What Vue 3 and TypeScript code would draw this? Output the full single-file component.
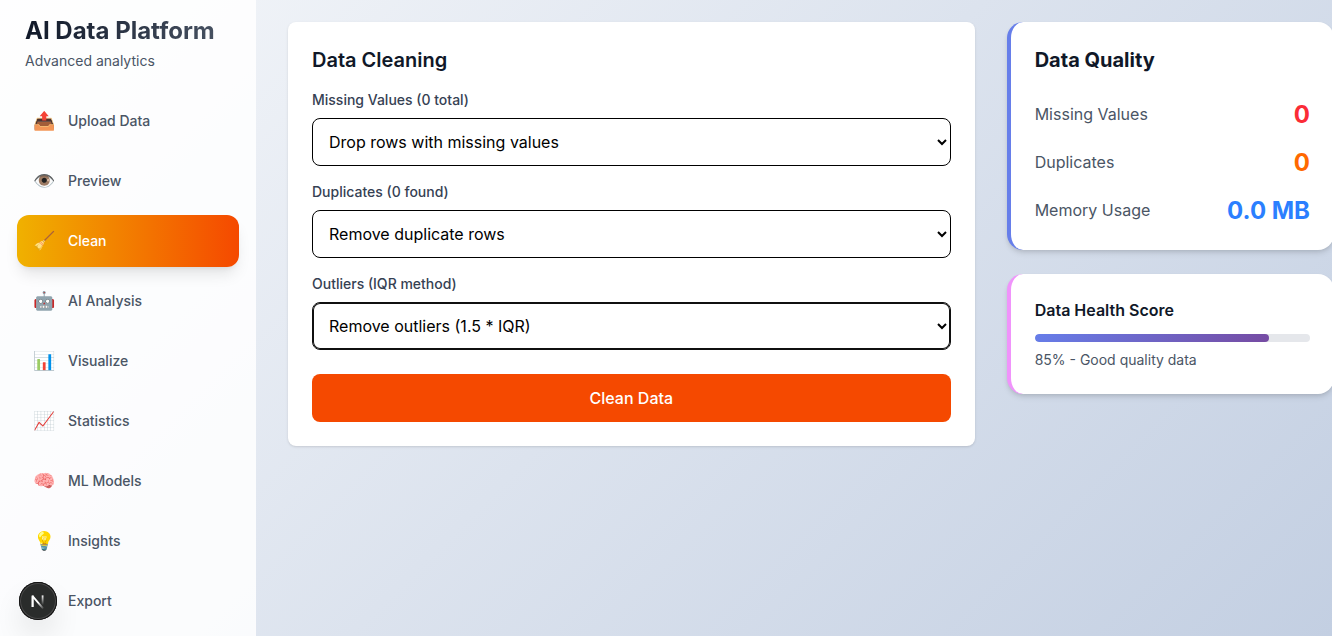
<script setup lang="ts">
import { ref } from 'vue'

interface NavItem {
  id: string
  label: string
  icon: string
}

interface Option {
  value: string
  label: string
}

interface Field {
  id: string
  label: string
  options: Option[]
}

const navItems: NavItem[] = [
  { id: 'upload', label: 'Upload Data', icon: '📤' },
  { id: 'preview', label: 'Preview', icon: '👁️' },
  { id: 'clean', label: 'Clean', icon: '🧹' },
  { id: 'analysis', label: 'AI Analysis', icon: '🤖' },
  { id: 'visualize', label: 'Visualize', icon: '📊' },
  { id: 'statistics', label: 'Statistics', icon: '📈' },
  { id: 'models', label: 'ML Models', icon: '🧠' },
  { id: 'insights', label: 'Insights', icon: '💡' },
  { id: 'export', label: 'Export', icon: '' },
]

const fields: Field[] = [
  {
    id: 'missing',
    label: 'Missing Values (0 total)',
    options: [{ value: 'drop', label: 'Drop rows with missing values' }],
  },
  {
    id: 'duplicates',
    label: 'Duplicates (0 found)',
    options: [{ value: 'remove', label: 'Remove duplicate rows' }],
  },
  {
    id: 'outliers',
    label: 'Outliers (IQR method)',
    options: [{ value: 'remove', label: 'Remove outliers (1.5 * IQR)' }],
  },
]

const metrics = [
  { label: 'Missing Values', value: '0', tone: 'red' },
  { label: 'Duplicates', value: '0', tone: 'orange' },
  { label: 'Memory Usage', value: '0.0 MB', tone: 'blue' },
]

const activeNav = ref('clean')
const activeField = ref('outliers')
const choices = ref<Record<string, string>>({
  missing: 'drop',
  duplicates: 'remove',
  outliers: 'remove',
})
const healthScore = ref(85)
</script>

<template>
  <div class="page">
    <aside class="sidebar">
      <header class="brand">
        <h1>AI Data Platform</h1>
        <p>Advanced analytics</p>
      </header>
      <nav class="nav">
        <button
          v-for="item in navItems"
          :key="item.id"
          type="button"
          class="nav-item"
          :class="{ active: item.id === activeNav }"
          @click="activeNav = item.id"
        >
          <span class="nav-icon" aria-hidden="true">{{ item.icon }}</span>
          <span>{{ item.label }}</span>
        </button>
      </nav>
    </aside>

    <main class="content">
      <section class="card cleaning">
        <h2>Data Cleaning</h2>
        <form class="form" @submit.prevent>
          <div v-for="field in fields" :key="field.id" class="field">
            <label :for="field.id">{{ field.label }}</label>
            <select
              :id="field.id"
              v-model="choices[field.id]"
              :class="{ current: field.id === activeField }"
              @focus="activeField = field.id"
            >
              <option v-for="o in field.options" :key="o.value" :value="o.value">{{ o.label }}</option>
            </select>
          </div>
          <button type="submit" class="submit">Clean Data</button>
        </form>
      </section>

      <div class="side">
        <section class="card metric-card quality">
          <h3>Data Quality</h3>
          <dl class="metrics">
            <div v-for="m in metrics" :key="m.label" class="metric">
              <dt>{{ m.label }}</dt>
              <dd :class="m.tone">{{ m.value }}</dd>
            </div>
          </dl>
        </section>
        <section class="card metric-card health">
          <h4>Data Health Score</h4>
          <div class="track">
            <div class="fill" :style="{ width: healthScore + '%' }"></div>
          </div>
          <p>{{ healthScore }}% - Good quality data</p>
        </section>
      </div>
    </main>

    <button type="button" class="dev-badge" aria-label="Open developer tools">
      <svg width="38" height="38" viewBox="0 0 38 38" fill="none">
        <defs>
          <linearGradient id="stem" x1="0" y1="13" x2="0" y2="23" gradientUnits="userSpaceOnUse">
            <stop stop-color="#fff" />
            <stop offset="1" stop-color="#fff" stop-opacity="0" />
          </linearGradient>
          <linearGradient id="diagonal" x1="20" y1="20" x2="25" y2="27" gradientUnits="userSpaceOnUse">
            <stop stop-color="#fff" />
            <stop offset="1" stop-color="#fff" stop-opacity="0" />
          </linearGradient>
        </defs>
        <path d="M13.6 25V14.2L24.2 26.6" stroke="url(#diagonal)" stroke-width="1.8" stroke-linejoin="bevel" />
        <path d="M13.6 25V13.4" stroke="#fff" stroke-width="1.8" />
        <path d="M23.6 13.4V23.5" stroke="url(#stem)" stroke-width="1.8" />
      </svg>
    </button>
  </div>
</template>

<style>
body {
  margin: 0;
}
</style>

<style scoped>
* {
  box-sizing: border-box;
  margin: 0;
}

.page {
  display: flex;
  height: 100vh;
  overflow: hidden;
  font-family: Inter, 'Liberation Sans', sans-serif;
  font-size: 16px;
  line-height: 24px;
  color: #101828;
  background: linear-gradient(135deg, #f5f7fa 0%, #c3cfe2 100%);
}

.sidebar {
  flex: 0 0 256px;
  padding: 15px 16px 0;
  border: solid rgba(255, 255, 255, 0.2);
  border-width: 0 1px;
  background: rgba(255, 255, 255, 0.85);
}

.brand {
  padding: 0 8px;
  margin-bottom: 24px;
}

.brand h1 {
  font-size: 24px;
  line-height: 32px;
  font-weight: 700;
  color: transparent;
  background: linear-gradient(to right, #101828, #4a5565);
  -webkit-background-clip: text;
  background-clip: text;
}

.brand p {
  margin-top: 4px;
  font-size: 14px;
  line-height: 20px;
  color: #4a5565;
}

.nav {
  display: flex;
  flex-direction: column;
  gap: 8px;
}

.nav-item {
  display: flex;
  align-items: center;
  gap: 12px;
  padding: 12px 16px;
  border: 0;
  border-radius: 12px;
  background: transparent;
  font: 500 14px/20px Inter, 'Liberation Sans', sans-serif;
  color: #4a5565;
  text-align: left;
  cursor: pointer;
}

.nav-item.active {
  color: #fff;
  background: linear-gradient(to right, #f0b100, #f54900);
  box-shadow: 0 10px 15px -3px rgba(0, 0, 0, 0.1), 0 4px 6px -4px rgba(0, 0, 0, 0.1);
}

.nav-icon {
  min-width: 23px;
  height: 28px;
  font-size: 18px;
  line-height: 28px;
}

.content {
  flex: 1;
  display: grid;
  grid-template-columns: repeat(3, minmax(0, 1fr));
  align-items: start;
  gap: 32px;
  padding: 22px 0 32px 32px;
  margin-right: -2px;
}

.card {
  padding: 24px;
  background: #fff;
}

.cleaning {
  grid-column: span 2;
  border-radius: 8px;
  box-shadow: 0 1px 3px rgba(0, 0, 0, 0.1), 0 1px 2px -1px rgba(0, 0, 0, 0.1);
}

h2 {
  margin-bottom: 16px;
  font-size: 20px;
  line-height: 28px;
  font-weight: 600;
}

.form {
  display: flex;
  flex-direction: column;
  gap: 16px;
}

.field {
  display: flex;
  flex-direction: column;
  gap: 8px;
}

.field label {
  font-size: 14px;
  line-height: 20px;
  font-weight: 500;
  color: #364153;
}

.field select {
  width: 100%;
  height: 48px;
  padding: 0 12px;
  border: 1px solid #000;
  border-radius: 8px;
  background-color: #fff;
  font: 400 16px/24px Inter, 'Liberation Sans', sans-serif;
  color: #000;
  outline: none;
}

.field select.current {
  border-color: #101010;
  box-shadow: inset 0 0 0 1px #101010;
}

.submit {
  height: 48px;
  margin-top: 8px;
  border: 0;
  border-radius: 8px;
  background: #f54900;
  font: 500 16px/24px Inter, 'Liberation Sans', sans-serif;
  color: #fff;
  cursor: pointer;
}

.side {
  display: flex;
  flex-direction: column;
  gap: 24px;
}

.metric-card {
  border-left: 4px solid #667eea;
  border-radius: 16px;
  box-shadow: 0 4px 6px -1px rgba(0, 0, 0, 0.1), 0 2px 4px -1px rgba(0, 0, 0, 0.1);
}

.health {
  border-left-color: #f093fb;
}

h3 {
  margin-bottom: 24px;
  font-size: 20px;
  line-height: 28px;
  font-weight: 700;
}

.metrics {
  display: flex;
  flex-direction: column;
  gap: 16px;
}

.metric {
  display: flex;
  align-items: center;
  justify-content: space-between;
}

.metric dt {
  color: #4a5565;
}

.metric dd {
  padding-top: 2px;
  font-size: 24px;
  line-height: 30px;
  font-weight: 700;
}

.red {
  color: #fb2c36;
}

.orange {
  color: #ff6900;
}

.blue {
  color: #2b7fff;
}

h4 {
  margin-bottom: 12px;
  font-size: 16px;
  line-height: 24px;
  font-weight: 600;
}

.track {
  height: 8px;
  border-radius: 4px;
  background: #e5e7eb;
  overflow: hidden;
}

.fill {
  height: 100%;
  border-radius: 4px;
  background: linear-gradient(135deg, #667eea 0%, #764ba2 100%);
}

.health p {
  margin-top: 8px;
  font-size: 14px;
  line-height: 20px;
  color: #4a5565;
}

.dev-badge {
  position: fixed;
  left: 19px;
  bottom: 16px;
  width: 38px;
  height: 38px;
  padding: 0;
  border: 0;
  border-radius: 50%;
  background: #2a2c2b;
  box-shadow: inset 0 0 0 1px #111, inset 0 0 0 2px #4a4a4a, 0 16px 32px -8px rgba(0, 0, 0, 0.24);
  cursor: pointer;
}

.dev-badge svg {
  display: block;
}
</style>
